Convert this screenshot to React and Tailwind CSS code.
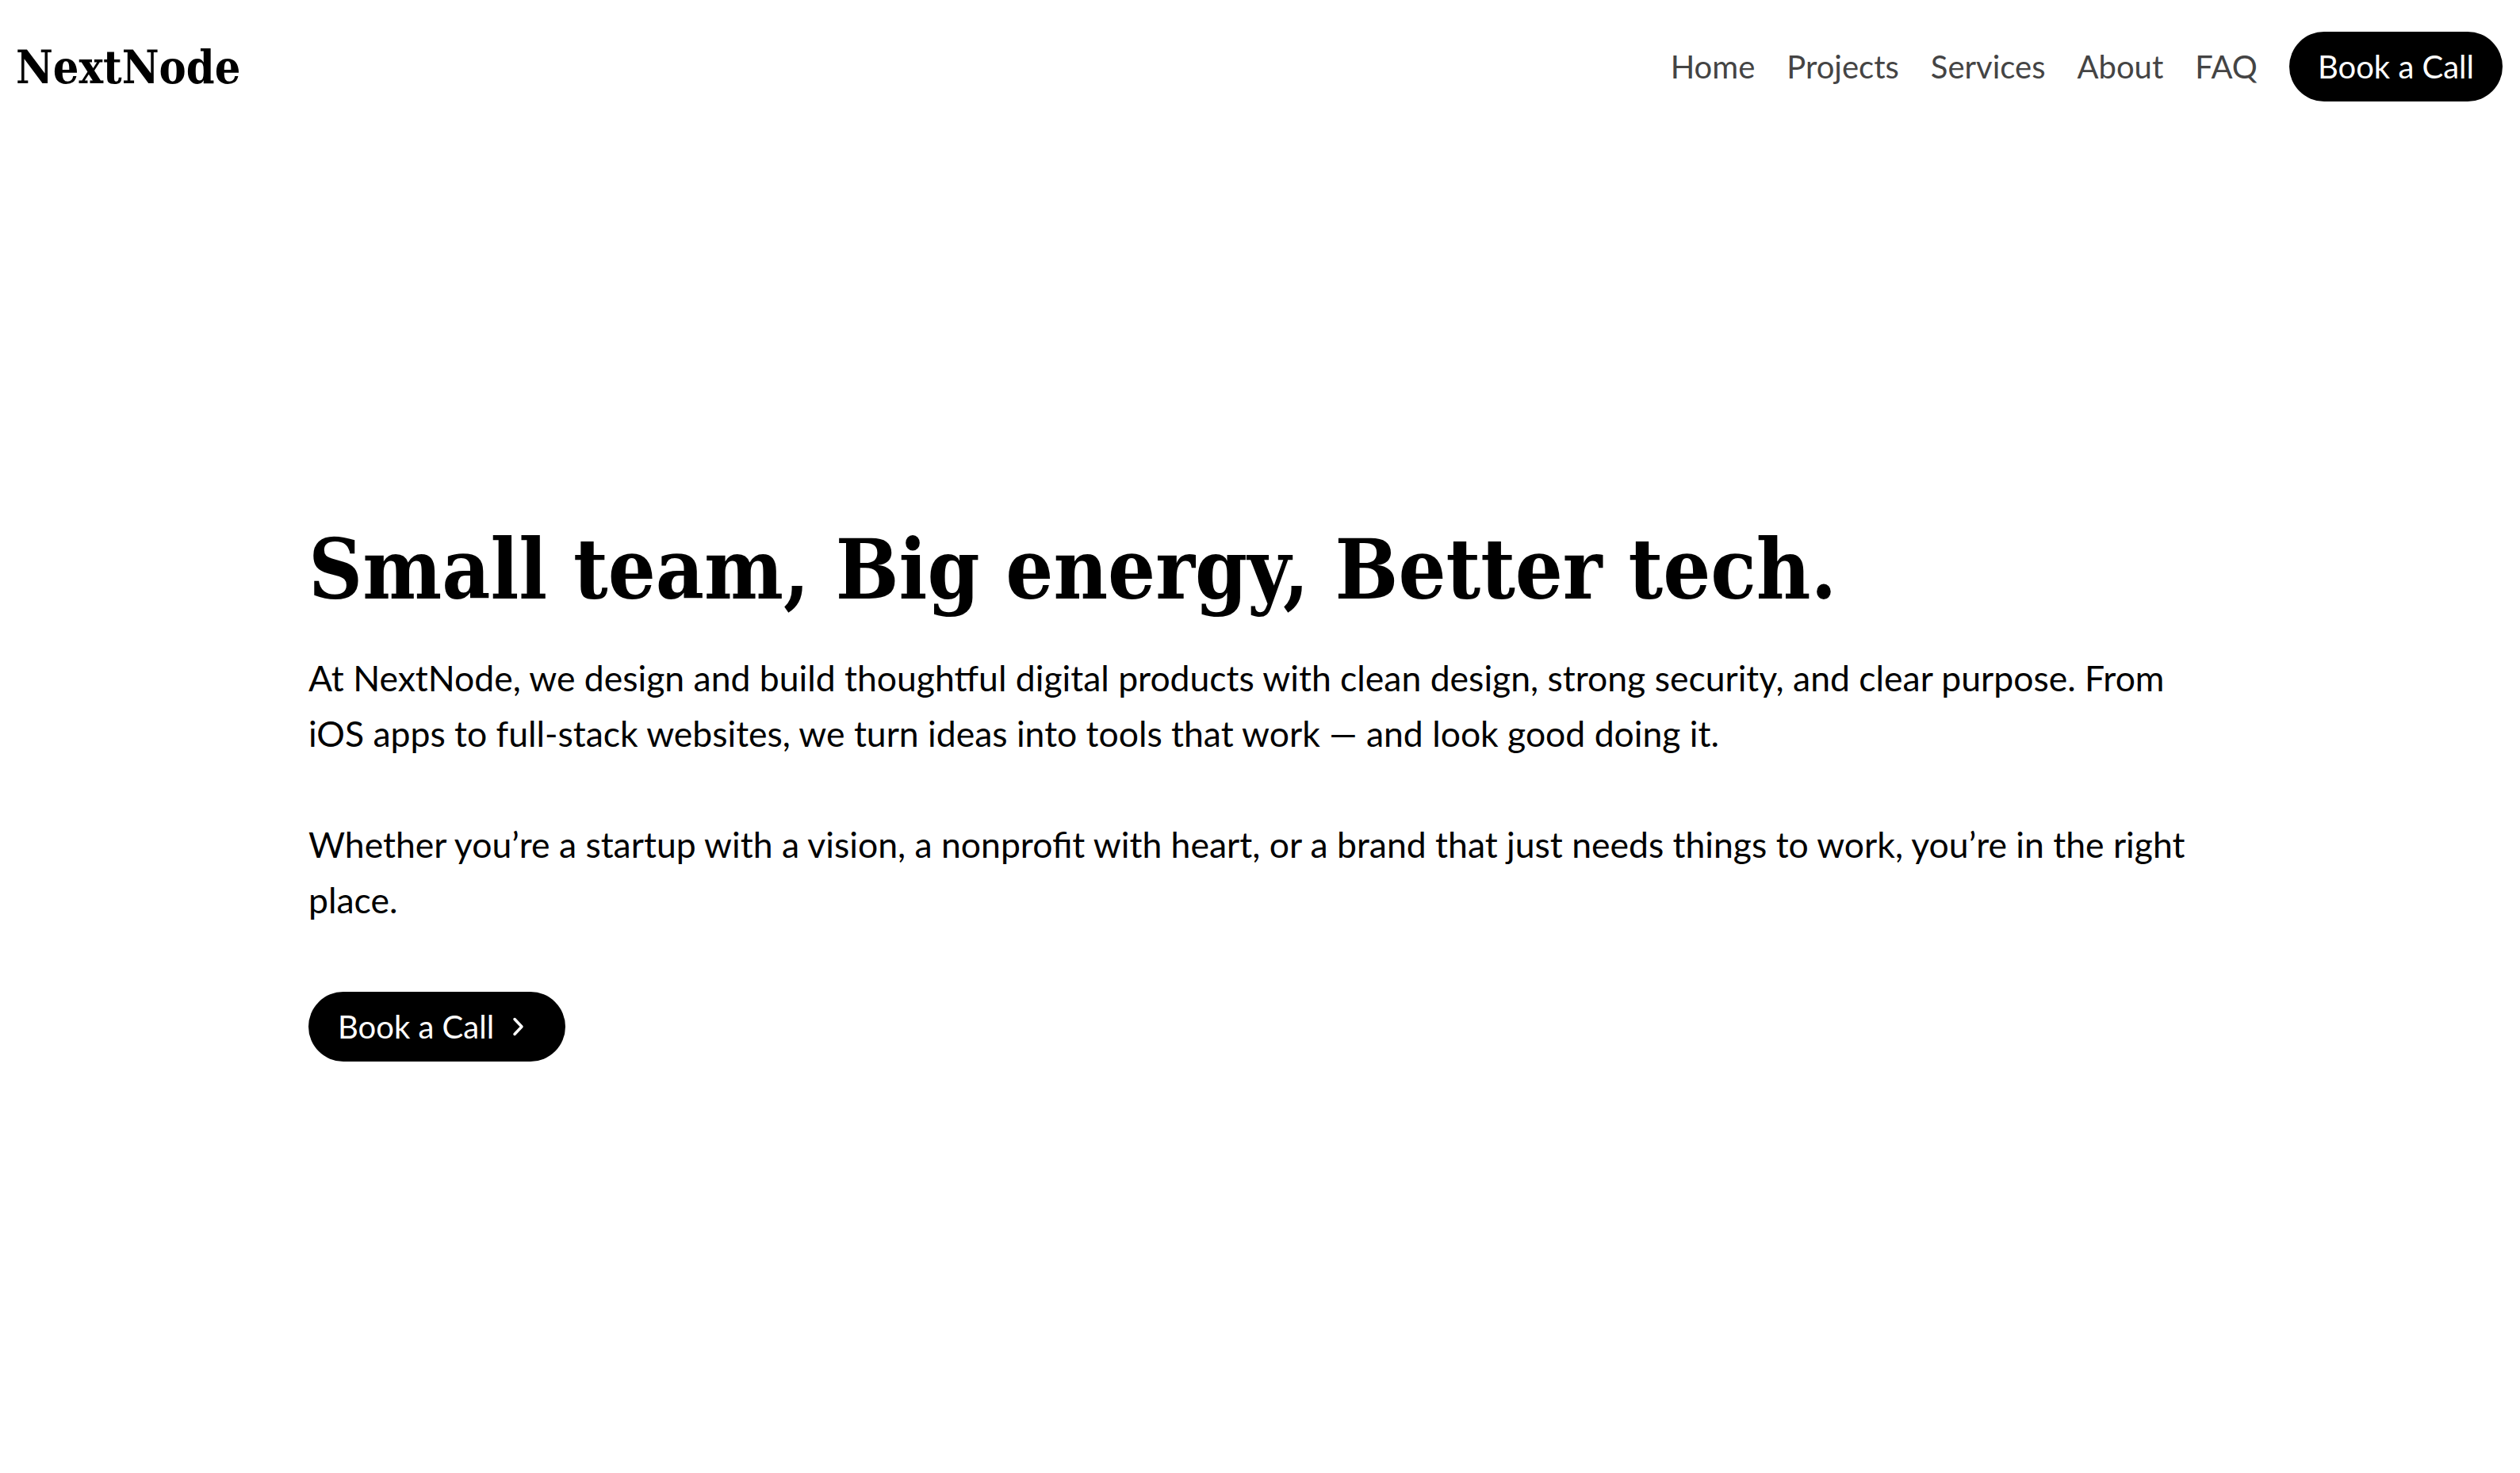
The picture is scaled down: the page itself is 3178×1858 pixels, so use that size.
import React from "react";

export default function App() {
  const serif = { fontFamily: '"DejaVu Serif Condensed", "DejaVu Serif", serif' };
  return (
    <div className="min-h-[1858px] bg-white text-black" style={{ fontFamily: 'Lato, "Noto Sans", sans-serif' }}>
      <header className="flex items-center justify-between pl-[20px] pr-[22px] pt-[40px]">
        <div className="text-[57px] font-bold leading-none" style={serif}>NextNode</div>
        <nav className="flex items-center gap-[40px] text-[40px] text-[#444]">
          <a>Home</a>
          <a>Projects</a>
          <a>Services</a>
          <a>About</a>
          <a>FAQ</a>
          <a className="flex h-[88px] items-center rounded-full bg-black px-[36px] text-white">Book a Call</a>
        </nav>
      </header>
      <main className="mx-auto mt-[530px] w-[2400px]">
        <h1 className="text-[105px] font-bold leading-[120px]" style={serif}>Small team, Big energy, Better tech.</h1>
        <p className="mt-[42px] text-[44.5px] leading-[70px]">
          At NextNode, we design and build thoughtful digital products with clean design, strong security, and clear purpose. From iOS apps to full-stack websites, we turn ideas into tools that work — and look good doing it.
        </p>
        <p className="mt-[70px] text-[44.5px] leading-[70px]">
          Whether you’re a startup with a vision, a nonprofit with heart, or a brand that just needs things to work, you’re in the right place.
        </p>
        <button className="mt-[81px] flex h-[88px] items-center gap-[22px] rounded-full bg-black pl-[37px] pr-[52px] text-[40px] text-white">
          Book a Call
          <svg width="16" height="26" viewBox="0 0 16 26" fill="none" stroke="white" strokeWidth="3.5" strokeLinecap="round" strokeLinejoin="round">
            <path d="M4 3.5l9 9.5-9 9.5" />
          </svg>
        </button>
      </main>
    </div>
  );
}
